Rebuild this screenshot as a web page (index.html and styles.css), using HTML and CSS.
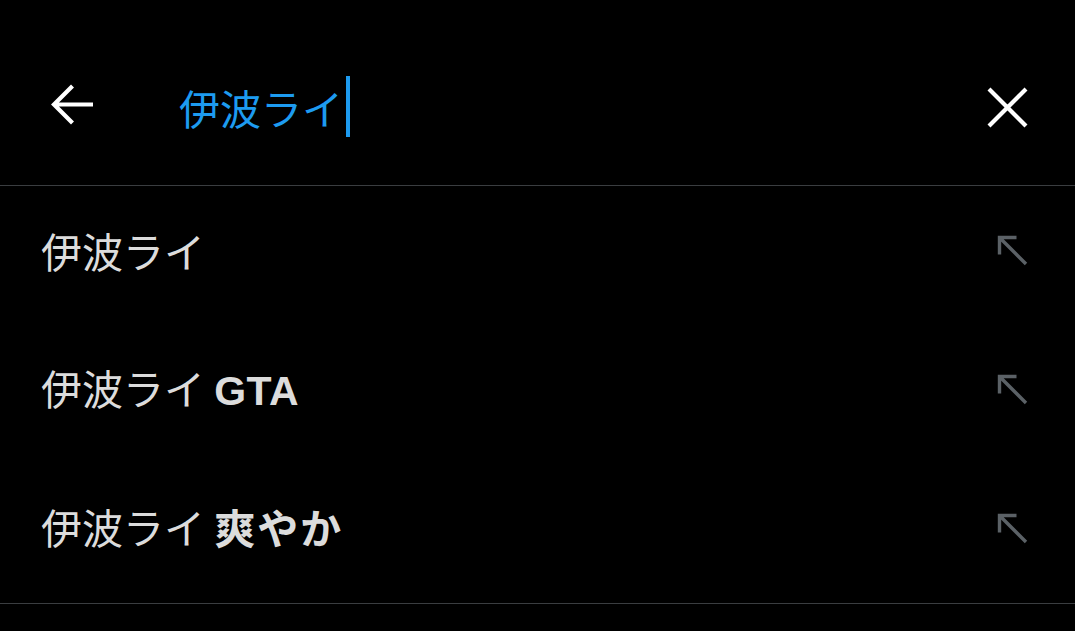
FILE: index.html
```html
<!DOCTYPE html>
<html lang="ja">
<head>
<meta charset="utf-8">
<link rel="stylesheet" href="styles.css">
</head>
<body>
<div class="page">
  <header class="search-bar">
    <button class="icon-btn back" aria-label="戻る">
      <svg width="48" height="48" viewBox="0 0 48 48"><path d="M45 21.5H6M24.5 3L6 21.5 24.5 40" fill="none" stroke="#fff" stroke-width="4.2" stroke-linecap="butt" stroke-linejoin="miter"/></svg>
    </button>
    <div class="query"><span class="query-text">伊波ライ</span><span class="caret"></span></div>
    <button class="icon-btn clear" aria-label="クリア">
      <svg width="44" height="44" viewBox="0 0 44 44"><path d="M3 4L40 41M40 4L3 41" fill="none" stroke="#fff" stroke-width="4.2"/></svg>
    </button>
  </header>
  <ul class="suggestions">
    <li class="item"><span class="label">伊波ライ</span><svg class="fill-arrow" width="34" height="34" viewBox="0 0 34 34"><path d="M3.5 20.5V3.5H20.5M3.5 3.5L30 30" fill="none" stroke="#5b6166" stroke-width="3.4"/></svg></li>
    <li class="item"><span class="label">伊波ライ <b>GTA</b></span><svg class="fill-arrow" width="34" height="34" viewBox="0 0 34 34"><path d="M3.5 20.5V3.5H20.5M3.5 3.5L30 30" fill="none" stroke="#5b6166" stroke-width="3.4"/></svg></li>
    <li class="item"><span class="label">伊波ライ <b class="kana">爽やか</b></span><svg class="fill-arrow" width="34" height="34" viewBox="0 0 34 34"><path d="M3.5 20.5V3.5H20.5M3.5 3.5L30 30" fill="none" stroke="#5b6166" stroke-width="3.4"/></svg></li>
  </ul>
</div>
</body>
</html>
```

FILE: styles.css
```css
* { box-sizing: border-box; }
html, body {
  margin: 0;
  padding: 0;
  background: #000;
}
body {
  font-family: "Liberation Sans", "Noto Sans CJK JP", sans-serif;
  color: #e0e0e0;
}
.page {
  width: 1075px;
  height: 631px;
  background: #000;
  overflow: hidden;
}
.search-bar {
  height: 186px;
  border-bottom: 1px solid #3a3d40;
  display: flex;
  align-items: center;
  padding: 28px 45px 0 48px;
}
.icon-btn {
  background: none;
  border: 0;
  padding: 0;
  display: flex;
  align-items: center;
  justify-content: center;
}
.back {
  width: 48px;
  height: 48px;
}
.query {
  flex: 1;
  display: flex;
  align-items: center;
  margin-left: 83px;
}
.query-text {
  font-family: "Noto Sans CJK JP", sans-serif;
  font-size: 41px;
  line-height: 60px;
  color: #1d9bf0;
}
.caret {
  width: 4px;
  height: 61px;
  background: #1d9bf0;
  margin-left: 3px;
}
.clear {
  width: 44px;
  height: 44px;
}
.suggestions {
  list-style: none;
  margin: 0;
  padding: 0;
  border-bottom: 1px solid #3a3d40;
}
.item {
  height: 139px;
  display: flex;
  align-items: center;
  justify-content: space-between;
  padding: 0 45px 12px 41px;
}
.label {
  font-family: "Noto Sans CJK JP", sans-serif;
  font-size: 41px;
  line-height: 60px;
  color: #dcdcdc;
}
.label b {
  font-family: "Liberation Sans", "Noto Sans CJK JP", sans-serif;
  font-weight: 700;
  color: #dcdcdc;
  letter-spacing: 0.5px;
}
.label .kana {
  letter-spacing: 2px;
}
.fill-arrow {
  flex: none;
  margin-top: 2px;
}
```
